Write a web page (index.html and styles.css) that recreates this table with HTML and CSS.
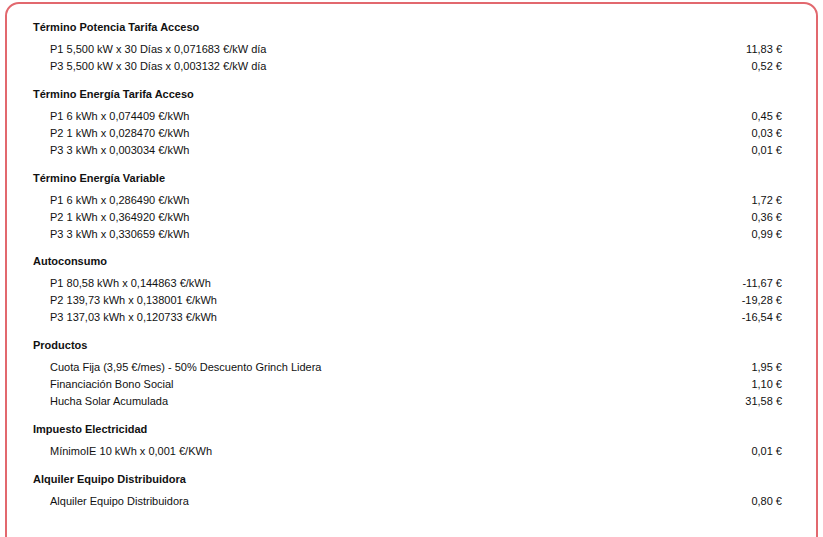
FILE: index.html
```html
<!DOCTYPE html>
<html lang="es">
<head>
    <meta charset="UTF-8">
    <meta name="viewport" content="width=device-width, initial-scale=1.0">
    <title>Detalle Factura</title>
    <link rel="stylesheet" href="styles.css">
</head>
<body>
    <div class="invoice-card">
        <div class="section">
            <div class="section-title">Término Potencia Tarifa Acceso</div>
            <div class="line"><span>P1 5,500 kW x 30 Días x 0,071683 €/kW día</span><span>11,83 €</span></div>
            <div class="line"><span>P3 5,500 kW x 30 Días x 0,003132 €/kW día</span><span>0,52 €</span></div>
        </div>
        <div class="section">
            <div class="section-title">Término Energía Tarifa Acceso</div>
            <div class="line"><span>P1 6 kWh x 0,074409 €/kWh</span><span>0,45 €</span></div>
            <div class="line"><span>P2 1 kWh x 0,028470 €/kWh</span><span>0,03 €</span></div>
            <div class="line"><span>P3 3 kWh x 0,003034 €/kWh</span><span>0,01 €</span></div>
        </div>
        <div class="section">
            <div class="section-title">Término Energía Variable</div>
            <div class="line"><span>P1 6 kWh x 0,286490 €/kWh</span><span>1,72 €</span></div>
            <div class="line"><span>P2 1 kWh x 0,364920 €/kWh</span><span>0,36 €</span></div>
            <div class="line"><span>P3 3 kWh x 0,330659 €/kWh</span><span>0,99 €</span></div>
        </div>
        <div class="section">
            <div class="section-title">Autoconsumo</div>
            <div class="line"><span>P1 80,58 kWh x 0,144863 €/kWh</span><span>-11,67 €</span></div>
            <div class="line"><span>P2 139,73 kWh x 0,138001 €/kWh</span><span>-19,28 €</span></div>
            <div class="line"><span>P3 137,03 kWh x 0,120733 €/kWh</span><span>-16,54 €</span></div>
        </div>
        <div class="section">
            <div class="section-title">Productos</div>
            <div class="line"><span>Cuota Fija (3,95 €/mes) - 50% Descuento Grinch Lidera</span><span>1,95 €</span></div>
            <div class="line"><span>Financiación Bono Social</span><span>1,10 €</span></div>
            <div class="line"><span>Hucha Solar Acumulada</span><span>31,58 €</span></div>
        </div>
        <div class="section">
            <div class="section-title">Impuesto Electricidad</div>
            <div class="line"><span>MínimoIE 10 kWh x 0,001 €/KWh</span><span>0,01 €</span></div>
        </div>
        <div class="section">
            <div class="section-title">Alquiler Equipo Distribuidora</div>
            <div class="line"><span>Alquiler Equipo Distribuidora</span><span>0,80 €</span></div>
        </div>
    </div>
</body>
</html>
```
FILE: styles.css
```css
body {
    margin: 0;
    padding: 2px 5px 0;
    background-color: #fff;
    font-family: "Liberation Sans", Arial, sans-serif;
    font-size: 11px;
    color: #111;
}
.invoice-card {
    border: 2px solid #e2686e;
    border-radius: 14px;
    padding: 15px 34px 40px 26px;
    min-height: 560px;
}
.section {
    margin-bottom: 10.83px;
}
.section-title {
    font-weight: bold;
    line-height: 17px;
    margin-bottom: 5px;
}
.line {
    display: flex;
    justify-content: space-between;
    line-height: 17px;
    padding-left: 17px;
}
```
